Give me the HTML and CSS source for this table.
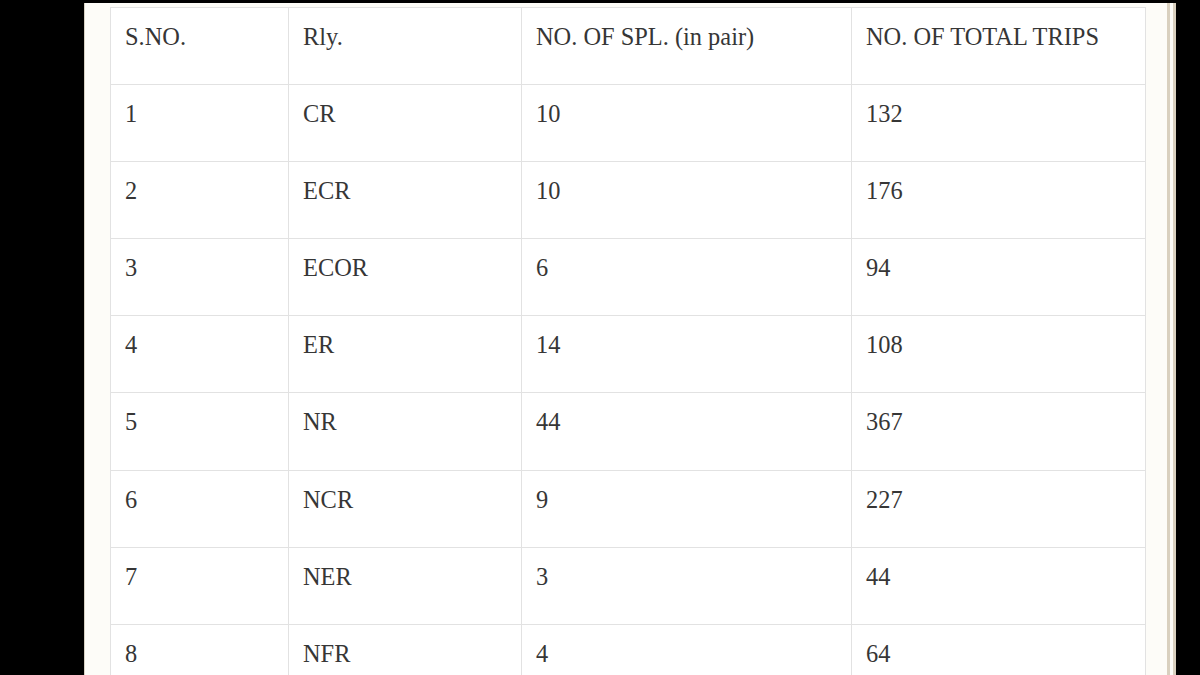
FILE: index.html
```html
<!DOCTYPE html>
<html>
<head>
<meta charset="utf-8">
<link rel="stylesheet" href="styles.css">
</head>
<body>
<div class="page">
  <table class="trips">
    <colgroup>
      <col class="c1"><col class="c2"><col class="c3"><col class="c4">
    </colgroup>
    <tr><td>S.NO.</td><td>Rly.</td><td>NO. OF SPL. (in pair)</td><td>NO. OF TOTAL TRIPS</td></tr>
    <tr><td>1</td><td>CR</td><td>10</td><td>132</td></tr>
    <tr><td>2</td><td>ECR</td><td>10</td><td>176</td></tr>
    <tr><td>3</td><td>ECOR</td><td>6</td><td>94</td></tr>
    <tr><td>4</td><td>ER</td><td>14</td><td>108</td></tr>
    <tr><td>5</td><td>NR</td><td>44</td><td>367</td></tr>
    <tr><td>6</td><td>NCR</td><td>9</td><td>227</td></tr>
    <tr><td>7</td><td>NER</td><td>3</td><td>44</td></tr>
    <tr><td>8</td><td>NFR</td><td>4</td><td>64</td></tr>
  </table>
</div>
</body>
</html>
```

FILE: styles.css
```css
html, body {
  margin: 0;
  padding: 0;
  background: #000;
  overflow: hidden;
}
.page {
  margin: 3px 0 0 84px;
  width: 1092px;
  box-sizing: border-box;
  background: #fdfcf8;
  border-left: 1px solid #d8d2c4;
  border-right: 9px double #d9d0bf;
  padding: 4px 0 0 25px;
  height: 800px;
}
.trips {
  border-collapse: collapse;
  table-layout: fixed;
  width: 1035px;
  background: #fff;
  font-family: "Liberation Serif", "Times New Roman", serif;
  font-size: 24.4px;
  color: #363636;
}
.c1 { width: 178px; }
.c2 { width: 233px; }
.c3 { width: 330px; }
.c4 { width: 294px; }
.trips td {
  border: 1px solid #e2e2e2;
  padding: 15px 13px 33.1px 14px;
  vertical-align: top;
  line-height: normal;
  white-space: nowrap;
}
```
